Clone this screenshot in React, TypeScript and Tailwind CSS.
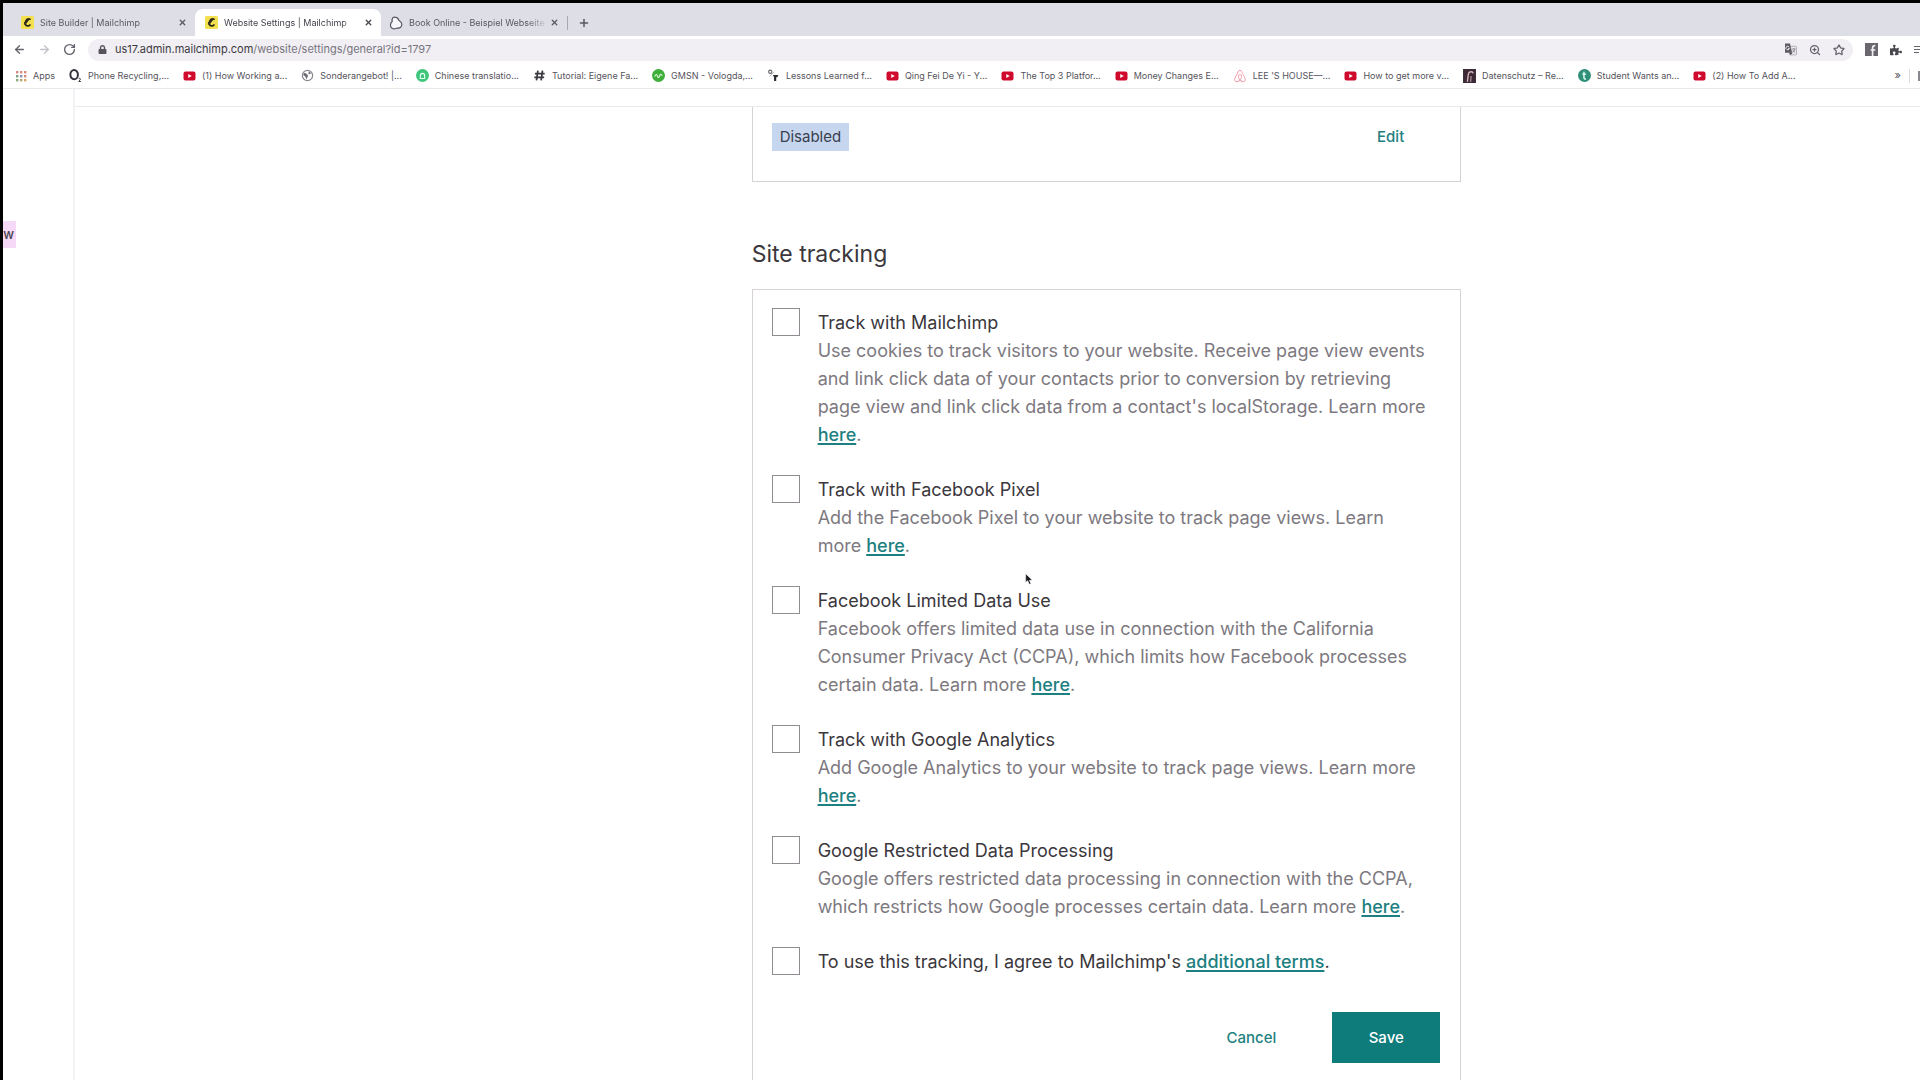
import React from "react";
import { ArrowLeft, ArrowRight, RotateCw, Star, X, Plus, ZoomIn } from "lucide-react";
import { FaAirbnb, FaLock, FaPuzzlePiece } from "react-icons/fa";

function MailchimpIcon() {
  return (
    <svg viewBox="0 0 24 24" className="size-[13px] shrink-0" aria-hidden="true">
      <rect width="24" height="24" rx="3" fill="#f2e04e" />
      <path d="M16.500 6C13 4 9.500 6.500 8.500 11c-2 1-2 3.500-.3 4.500 1.300 3.500 6 3.800 8.300 1" fill="none" stroke="#2a2718" strokeWidth="3.200" strokeLinecap="round" />
      <path d="M9 9c1.500-3 5-4.500 7-3l-4 5-3 4z" fill="#2a2718" />
    </svg>
  );
}

function BlobIcon() {
  return (
    <svg viewBox="0 0 24 24" className="size-[14px] shrink-0" aria-hidden="true">
      <path d="M10 2C5 1.500 5 7 5.500 9.500 2 12 1.500 18 4.500 20.500 7.500 23.500 12 21.500 14 20.500c5 1 8-2 8-6.500 0-3.500-3-5-5-6.500C16 4.500 13.500 2 10 2z" fill="#f7f6fa" stroke="#55525c" strokeWidth="2" />
    </svg>
  );
}

function AppsIcon() {
  const colors = ["#d98a80", "#d98a80", "#d98a80", "#7ba383", "#8a8fa8", "#d98a80", "#8dab7c", "#b8a56c", "#d9a56c"];
  return (
    <svg viewBox="0 0 12 12" className="size-3 shrink-0" aria-hidden="true">
      {colors.map((c, i) => (
        <rect key={i} x={1 + (i % 3) * 4} y={1 + Math.floor(i / 3) * 4} width="2.400" height="2.400" fill={c} />
      ))}
    </svg>
  );
}

function YoutubeIcon() {
  return (
    <svg viewBox="0 0 26 24" className="h-3 w-[13px] shrink-0" aria-hidden="true">
      <rect x="1" y="3" width="24" height="18" rx="4" fill="#cf0a2c" />
      <path d="M10.500 8v8l7-4z" fill="#fff" />
    </svg>
  );
}

function OxygenIcon() {
  return (
    <svg viewBox="0 0 24 24" className="size-[13px] shrink-0" aria-hidden="true">
      <ellipse cx="9.500" cy="10.500" rx="7" ry="8.500" fill="none" stroke="#33323c" strokeWidth="3.600" />
      <path d="M18 17.500c3-1 4 1 2 3l-2 2.500h4" fill="none" stroke="#33323c" strokeWidth="1.800" />
    </svg>
  );
}

function GlobeIcon() {
  return (
    <svg viewBox="0 0 24 24" className="size-[13px] shrink-0" aria-hidden="true">
      <circle cx="12" cy="12" r="9.500" fill="#fff" stroke="#8a8790" strokeWidth="2.200" />
      <path d="M6 7l5 2 2 4-3 6-2-5-4-3zM14 4l5 4-5 2z" fill="#6b6872" />
    </svg>
  );
}

function RingIcon() {
  return (
    <svg viewBox="0 0 24 24" className="size-[13px] shrink-0" aria-hidden="true">
      <circle cx="12" cy="12" r="12" fill="#3fc67c" />
      <path d="M8 17.500V12a4 4 0 018 0v5.500z" fill="none" stroke="#eafff2" strokeWidth="2" />
    </svg>
  );
}

function HashIcon() {
  return (
    <svg viewBox="0 0 24 24" className="size-[13px] shrink-0" aria-hidden="true">
      <path d="M9 3L6.500 21M17.500 3L15 21M3.500 8.500h18M2.500 15.500h18" stroke="#3a3940" strokeWidth="3.200" fill="none" />
    </svg>
  );
}

function GreenDiscIcon() {
  return (
    <svg viewBox="0 0 24 24" className="size-[13px] shrink-0" aria-hidden="true">
      <circle cx="12" cy="12" r="12" fill="#3fae3a" />
      <path d="M5 14c1.500-5 4-5 5-1s3 3 4-.5 3-3 5 0" fill="none" stroke="#d4f5cf" strokeWidth="2.200" />
    </svg>
  );
}

function SpriteIcon() {
  return (
    <svg viewBox="0 0 24 24" className="size-[13px] shrink-0" aria-hidden="true">
      <circle cx="6" cy="5" r="3" fill="none" stroke="#66636c" strokeWidth="2" />
      <path d="M5 14L13 5" stroke="#a5a2aa" strokeWidth="1.500" />
      <path d="M11 11h10l-2 4h-2v7h-4v-7z" fill="#2d2c33" />
    </svg>
  );
}

function DarkTileIcon() {
  return (
    <svg viewBox="0 0 24 26" className="h-[14px] w-[13px] shrink-0" aria-hidden="true">
      <rect width="24" height="26" fill="#3b2a35" />
      <path d="M8 24L10 9c1-5 8-5 9-1" fill="none" stroke="#d8b7bb" strokeWidth="2.500" />
      <path d="M15 13l-1 11" stroke="#a98a95" strokeWidth="2.500" />
    </svg>
  );
}

function TealDiscIcon() {
  return (
    <svg viewBox="0 0 24 24" className="size-[13px] shrink-0" aria-hidden="true">
      <circle cx="12" cy="12" r="12" fill="#2f8f78" />
      <path d="M11 5v11c0 2 1.500 3 3.500 2M8 9.500h7" fill="none" stroke="#e6fff8" strokeWidth="2.600" />
    </svg>
  );
}

function TranslateIcon() {
  return (
    <svg viewBox="0 0 24 24" className="size-[13px]" aria-hidden="true">
      <rect x="10" y="6" width="13" height="16" rx="1.500" fill="#eceaf0" stroke="#a5a2aa" strokeWidth="1.500" />
      <path d="M2 1h9l4 17H2z" fill="#5b5961" />
      <path d="M9.500 7.500A3.200 3.200 0 1010 10H7.500" fill="none" stroke="#fff" strokeWidth="1.600" />
      <path d="M15 11h6M18 9.500V11M20 11c-.5 3-2.500 5-4.500 6M16 13c1 2 3 3.500 4.500 4" stroke="#77747d" strokeWidth="1.400" fill="none" />
      <path d="M10 18h6l-4 4z" fill="#44424a" />
    </svg>
  );
}

function FacebookTileIcon() {
  return (
    <svg viewBox="0 0 24 24" className="size-[13px]" aria-hidden="true">
      <rect width="24" height="24" fill="#6a686e" />
      <path d="M14 24V9c0-3 1.500-4.500 5-4.500M10.500 13H19" fill="none" stroke="#f4f2f6" strokeWidth="3" />
    </svg>
  );
}

function PointerIcon() {
  return (
    <svg viewBox="0 0 12 18" className="h-3 w-2" aria-hidden="true">
      <path d="M1 1v13l3-2.500L6.500 17l2.500-1-2.500-5H11z" fill="#1d1b20" stroke="#fff" strokeWidth=".8" />
    </svg>
  );
}

const tabs = [
  { title: "Site Builder | Mailchimp", icon: <MailchimpIcon />, active: false },
  { title: "Website Settings | Mailchimp", icon: <MailchimpIcon />, active: true },
  { title: "Book Online - Beispiel Webseite", icon: <BlobIcon />, active: false },
];

const bookmarks = [
  { label: "Phone Recycling,...", icon: <OxygenIcon /> },
  { label: "(1) How Working a...", icon: <YoutubeIcon /> },
  { label: "Sonderangebot! |...", icon: <GlobeIcon /> },
  { label: "Chinese translatio...", icon: <RingIcon /> },
  { label: "Tutorial: Eigene Fa...", icon: <HashIcon /> },
  { label: "GMSN - Vologda,...", icon: <GreenDiscIcon /> },
  { label: "Lessons Learned f...", icon: <SpriteIcon /> },
  { label: "Qing Fei De Yi - Y...", icon: <YoutubeIcon /> },
  { label: "The Top 3 Platfor...", icon: <YoutubeIcon /> },
  { label: "Money Changes E...", icon: <YoutubeIcon /> },
  { label: "LEE 'S HOUSE—...", icon: <FaAirbnb className="size-[14px] shrink-0 text-[#ec8f9f]" /> },
  { label: "How to get more v...", icon: <YoutubeIcon /> },
  { label: "Datenschutz – Re...", icon: <DarkTileIcon /> },
  { label: "Student Wants an...", icon: <TealDiscIcon /> },
  { label: "(2) How To Add A...", icon: <YoutubeIcon /> },
];

function InlineLink({ children }: { children: React.ReactNode }) {
  return (
    <a href="#" className="font-medium text-[#1d7f7f] underline decoration-2 underline-offset-2">
      {children}
    </a>
  );
}

const options = [
  {
    id: "mailchimp",
    title: "Track with Mailchimp",
    text: "Use cookies to track visitors to your website. Receive page view events and link click data of your contacts prior to conversion by retrieving page view and link click data from a contact's localStorage. Learn more ",
  },
  {
    id: "pixel",
    title: "Track with Facebook Pixel",
    text: "Add the Facebook Pixel to your website to track page views. Learn more\u00a0",
  },
  {
    id: "ldu",
    title: "Facebook Limited Data Use",
    text: "Facebook offers limited data use in connection with the California Consumer Privacy Act (CCPA), which limits how Facebook processes certain data. Learn more ",
  },
  {
    id: "analytics",
    title: "Track with Google Analytics",
    text: "Add Google Analytics to your website to track page views. Learn more ",
  },
  {
    id: "rdp",
    title: "Google Restricted Data Processing",
    text: "Google offers restricted data processing in connection with the CCPA, which restricts how Google processes certain data. Learn more ",
  },
];

function Checkbox({ id }: { id: string }) {
  return (
    <input
      id={id}
      type="checkbox"
      className="size-7 shrink-0 appearance-none border border-[#8f8b90] bg-white checked:bg-[#0f7c7c]"
    />
  );
}

function BrowserChrome() {
  return (
    <header className="shrink-0">
      <div className="flex h-[33px] items-end bg-[#dedee7] pl-1.5 text-[9px] text-[#5a5862]">
        {tabs.map((tab) => (
          <div
            key={tab.title}
            className={
              tab.active
                ? "flex h-[27px] w-[186px] items-center rounded-t-lg bg-white pr-1.5 pl-2.5 text-[#45434c]"
                : "flex h-[27px] w-[186px] items-center pr-1.5 pl-2 first:pl-3"
            }
          >
            {tab.icon}
            <button type="button" className="ml-1.5 min-w-0 flex-1 overflow-hidden mask-r-from-85% text-left whitespace-nowrap">
              {tab.title}
            </button>
            <button type="button" aria-label={"Close " + tab.title} className="p-0.5">
              <X className="size-[9px]" strokeWidth={3.5} />
            </button>
          </div>
        ))}
        <div className="flex h-[27px] items-center">
          <span className="h-[14px] w-px bg-[#a9a8b3]" />
          <button type="button" aria-label="New tab" className="ml-2.5">
            <Plus className="size-3" strokeWidth={3} />
          </button>
        </div>
      </div>

      <div className="flex h-[27px] items-center bg-white pl-2.5 text-[#65636b]">
        <button type="button" aria-label="Back" className="mr-3">
          <ArrowLeft className="size-[13px]" strokeWidth={2.5} />
        </button>
        <button type="button" aria-label="Forward" className="mr-3 text-[#c4c2c9]">
          <ArrowRight className="size-[13px]" strokeWidth={2.5} />
        </button>
        <button type="button" aria-label="Reload" className="mr-3">
          <RotateCw className="size-[13px]" strokeWidth={2.5} />
        </button>
        <div className="flex h-[22px] flex-1 items-center rounded-full bg-[#f1eff4] pr-2 pl-2.5">
          <FaLock className="size-[9px] text-[#55535b]" />
          <p className="ml-2 flex-1 text-[11px] text-[#77757d]" aria-label="Address">
            <span className="text-[#3c3a42]">us17.admin.mailchimp.com</span>
            /website/settings/general?id=1797
          </p>
          <div className="flex items-center gap-3">
            <button type="button" aria-label="Translate">
              <TranslateIcon />
            </button>
            <button type="button" aria-label="Zoom">
              <ZoomIn className="size-[12px]" strokeWidth={2.5} />
            </button>
            <button type="button" aria-label="Bookmark">
              <Star className="size-[12px]" strokeWidth={2.5} />
            </button>
          </div>
        </div>
        <div className="ml-3 flex items-center gap-3 overflow-hidden">
          <button type="button" aria-label="Facebook">
            <FacebookTileIcon />
          </button>
          <button type="button" aria-label="Extensions">
            <FaPuzzlePiece className="size-[12px] text-[#4a484f]" />
          </button>
          <button type="button" aria-label="Media" className="flex w-[6px] flex-col gap-0.5 overflow-hidden">
            <span className="h-px w-3 bg-[#65636b]" />
            <span className="h-px w-3 bg-[#65636b]" />
            <span className="h-px w-[5px] bg-[#65636b]" />
          </button>
        </div>
      </div>

      <nav aria-label="Bookmarks" className="flex h-[26px] items-center gap-[14px] overflow-hidden border-b border-[#ece9ee] bg-white pl-3 text-[9px] text-[#55535b]">
        <a href="#" className="flex shrink-0 items-center gap-1.5">
          <AppsIcon />
          Apps
        </a>
        {bookmarks.map((b) => (
          <a key={b.label} href="#" className="flex shrink-0 items-center gap-1.5 whitespace-nowrap">
            {b.icon}
            {b.label}
          </a>
        ))}
        <div className="ml-auto flex items-center gap-2">
          <button type="button" aria-label="More bookmarks" className="text-[11px]">
            »
          </button>
          <span className="h-3.5 w-px bg-[#dddbe0]" />
          <span className="h-2.5 w-0.5 bg-[#8a8790]" />
        </div>
      </nav>
    </header>
  );
}

export default function App() {
  return (
    <div className="flex h-screen flex-col overflow-hidden border-t-[3px] border-l-[3px] border-black bg-white font-['Inter',sans-serif]">
      <BrowserChrome />
      <div className="flex min-h-0 flex-1">
        <aside className="w-[72px] shrink-0 border-r-2 border-[#f4f2f4] pt-[132px]">
          <a href="#" className="flex h-[27px] w-[13px] items-center justify-end overflow-hidden bg-[#f5d9f7] pr-0.5 text-[13px] font-medium text-[#4a3f4c]">
            w
          </a>
        </aside>
        <div className="flex min-w-0 flex-1 flex-col">
          <div className="h-[18px] shrink-0 border-b border-[#ece9ee]" />
          <main className="grid min-h-0 flex-1 grid-cols-[677fr_710fr_459fr] overflow-hidden">
            <div className="col-start-2 min-w-0">
              <section className="flex h-[75px] items-start justify-between border border-t-0 border-[#d6d2d6] pt-4 pr-14 pl-[19px]">
                <span className="bg-[#c7d6ef] px-2 text-[15px] leading-7 text-[#38404e]">Disabled</span>
                <button type="button" className="text-[15px] leading-7 font-medium text-[#22807f]">
                  Edit
                </button>
              </section>

              <h2 className="mt-14 text-[23px] leading-8 text-[#3b373c]">Site tracking</h2>

              <form className="mt-[19px] border border-[#d6d2d6] pt-[18px] pr-5 pb-20 pl-[19px] text-[18px] leading-7">
                <div className="flex flex-col gap-[26px]">
                  {options.map((o) => (
                    <div key={o.id} className="flex gap-[18px]">
                      <Checkbox id={o.id} />
                      <div className="min-w-0 pt-px pr-1">
                        <label htmlFor={o.id} className="block text-[#3b373c]">
                          {o.title}
                        </label>
                        <p className="text-[#7d797f]">
                          {o.text}
                          <InlineLink>here</InlineLink>.
                        </p>
                      </div>
                    </div>
                  ))}
                  <div className="flex gap-[18px]">
                    <Checkbox id="terms" />
                    <label htmlFor="terms" className="pt-px text-[#3b373c]">
                      To use this tracking, I agree to Mailchimp's <InlineLink>additional terms</InlineLink>.
                    </label>
                  </div>
                </div>
                <div className="mt-9 flex items-center justify-end gap-14 text-[15px] font-medium">
                  <button type="button" className="text-[#22807f]">
                    Cancel
                  </button>
                  <button type="submit" className="h-[51px] w-[108px] bg-[#0f7c7c] text-white">
                    Save
                  </button>
                </div>
              </form>
            </div>
          </main>
        </div>
      </div>
      <div className="pointer-events-none absolute top-[573px] left-[1025px]">
        <PointerIcon />
      </div>
    </div>
  );
}
